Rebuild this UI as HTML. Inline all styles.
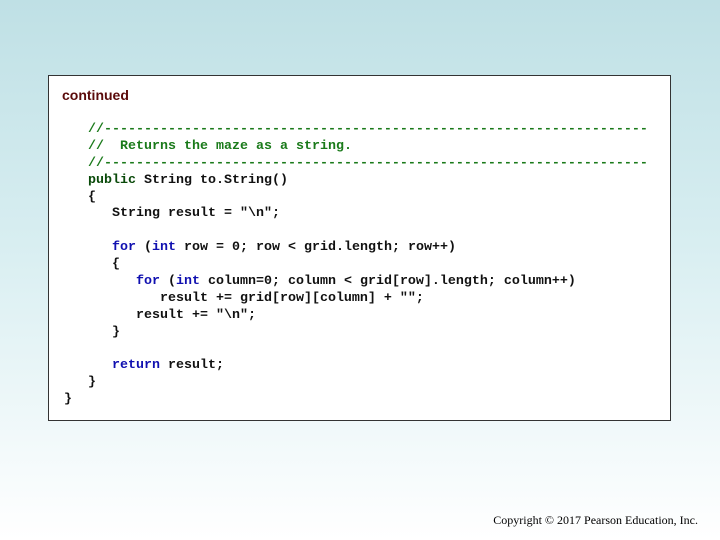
<!DOCTYPE html>
<html><head><style>
html,body{margin:0;padding:0}
body{width:720px;height:540px;background:linear-gradient(#bfe0e5 0%,#d8eef1 45%,#ffffff 100%);position:relative;overflow:hidden;font-family:"Liberation Sans",sans-serif}
.box{position:absolute;left:48px;top:75px;width:621px;height:344px;background:#fff;border:1px solid #333}
.cont{position:absolute;left:62px;top:87px;font-size:14px;color:#5a0a0a;font-weight:bold}
pre{position:absolute;left:64px;top:122px;margin:0;font-family:"Liberation Mono",monospace;font-weight:bold;font-size:13.33px;line-height:16.88px;color:#111}
.c{color:#1a7a1a}.k{color:#0a4a0a}.b{color:#1010b0}
.copy{position:absolute;right:22px;top:513px;font-family:"Liberation Serif",serif;font-size:12px;color:#000}
</style></head><body>
<div class="box"></div>
<div class="cont">continued</div>
<pre>   <span class="c">//--------------------------------------------------------------------</span>
   <span class="c">//  Returns the maze as a string.</span>
   <span class="c">//--------------------------------------------------------------------</span>
   <span class="k">public</span> String to.String()
   {
      String result = "\n";

      <span class="b">for</span> (<span class="b">int</span> row = 0; row &lt; grid.length; row++)
      {
         <span class="b">for</span> (<span class="b">int</span> column=0; column &lt; grid[row].length; column++)
            result += grid[row][column] + "";
         result += "\n";
      }

      <span class="b">return</span> result;
   }
}</pre>
<div class="copy">Copyright © 2017 Pearson Education, Inc.</div>
</body></html>
